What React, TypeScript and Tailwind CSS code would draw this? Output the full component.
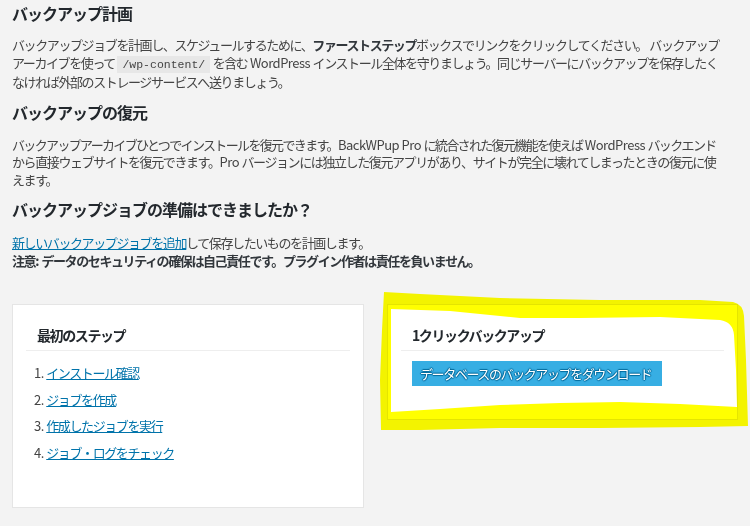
import type { ReactNode } from "react";

const steps = ["インストール確認", "ジョブを作成", "作成したジョブを実行", "ジョブ・ログをチェック"];

// latin words keep near-normal spacing, the kana around them are tightened
function L({ children }: { children: ReactNode }) {
  return <span className="tracking-[-0.5px]">{children}</span>;
}

function Card({ title, className, children }: { title: string; className?: string; children: ReactNode }) {
  return (
    <div className={`border border-[#e5e5e5] bg-white px-[13px] ${className ?? ""}`}>
      <h3 className="border-b border-[#eeeeee] px-[11px] pt-[20px] pb-[5px] text-[14px] font-bold leading-[20px] tracking-[-1.4px] text-[#23282d]">
        {title}
      </h3>
      {children}
    </div>
  );
}

export default function App() {
  return (
    <div className="relative h-[526px] w-[750px] overflow-hidden bg-[#f3f3f3] font-['Noto_Sans_CJK_JP',sans-serif] text-[13px] tracking-[-1.4px] text-[#444]">
      <div className="whitespace-nowrap px-[12px] pt-[3px]">
        <h2 className="text-[16px] font-bold leading-[20px] tracking-[-1px] text-[#23282d]">バックアップ計画</h2>
        <p className="mt-[13px] leading-[17.5px]">
          バックアップジョブを計画し、スケジュールするために、<b className="text-[#32373c]">ファーストステップ</b>ボックスでリンクをクリックしてください。<L> </L>バックアップ
          <br />
          アーカイブを使って<L> </L>
          <code className="bg-[#e7e7e7] px-[5px] py-[2px] font-['Liberation_Mono',monospace] text-[11.5px] tracking-normal text-[#444]">/wp-content/</code>
          <L> </L>を含む<L> WordPress </L>インストール全体を守りましょう。同じサーバーにバックアップを保存したく
          <br />
          なければ外部のストレージサービスへ送りましょう。
        </p>

        <h2 className="mt-[11px] text-[16px] font-bold leading-[20px] tracking-[-1px] text-[#23282d]">バックアップの復元</h2>
        <p className="mt-[14px] leading-[17.5px]">
          <span className="tracking-[-1.65px]">
            バックアップアーカイブひとつでインストールを復元できます。<L>BackWPup Pro </L>に統合された復元機能を使えば<L> WordPress </L>バックエンド
          </span>
          <br />
          から直接ウェブサイトを復元できます。<L>Pro </L>バージョンには独立した復元アプリがあり、サイトが完全に壊れてしまったときの復元に使
          <br />
          えます。
        </p>

        <h2 className="mt-[11px] text-[16px] font-bold leading-[20px] tracking-[-1px] text-[#23282d]">バックアップジョブの準備はできましたか？</h2>
        <p className="mt-[15px] leading-[17.5px]">
          <a href="#" className="text-[#0073aa] underline">新しいバックアップジョブを追加</a>して保存したいものを計画します。
          <br />
          <b className="text-[#32373c]">注意<L>: </L>データのセキュリティの確保は自己責任です。プラグイン作者は責任を負いません。</b>
        </p>
      </div>

      <div className="mt-[35px] flex items-start gap-[23px] px-[12px]">
        <Card title="最初のステップ" className="w-[353px] pb-[41px]">
          <ol className="mt-[9px] px-[8px]">
            {steps.map((s, i) => (
              <li key={s} className="leading-[26.5px]">
                <L>{i + 1}. </L>
                <a href="#" className="text-[#0073aa] underline">{s}</a>
              </li>
            ))}
          </ol>
        </Card>
        <Card title="1クリックバックアップ" className="w-[352px] pb-[33px]">
          <div className="mt-[10px] px-[11px]">
            <button className="h-[25px] w-[250px] bg-[#37aee3] pl-[8px] text-left text-[13px] text-white [text-shadow:0_-1px_1px_#006799,1px_0_1px_#006799,0_1px_1px_#006799,-1px_0_1px_#006799]">
              データベースのバックアップをダウンロード
            </button>
          </div>
        </Card>
      </div>

      {/* hand-drawn highlighter mark around the 1-click card */}
      <svg className="pointer-events-none absolute inset-0 mix-blend-multiply" width="750" height="526" viewBox="0 0 750 526">
        <path
          fillRule="evenodd"
          fill="#ffff00"
          d="M384,292 L420,294 L500,298 L600,300 L700,300 L733,302 Q743,304 744,316 L746,360 L748,426 L700,427 L600,428 L500,428 L420,430 L381,430 L380,380 L382,330 Z
             M391,309 L450,311 L520,318 L580,318 L660,317 L720,320 Q733,322 734,335 L736,370 L737,407 L680,404 L620,402 L560,403 L500,405 L440,409 L391,412 Z"
        />
      </svg>
    </div>
  );
}
